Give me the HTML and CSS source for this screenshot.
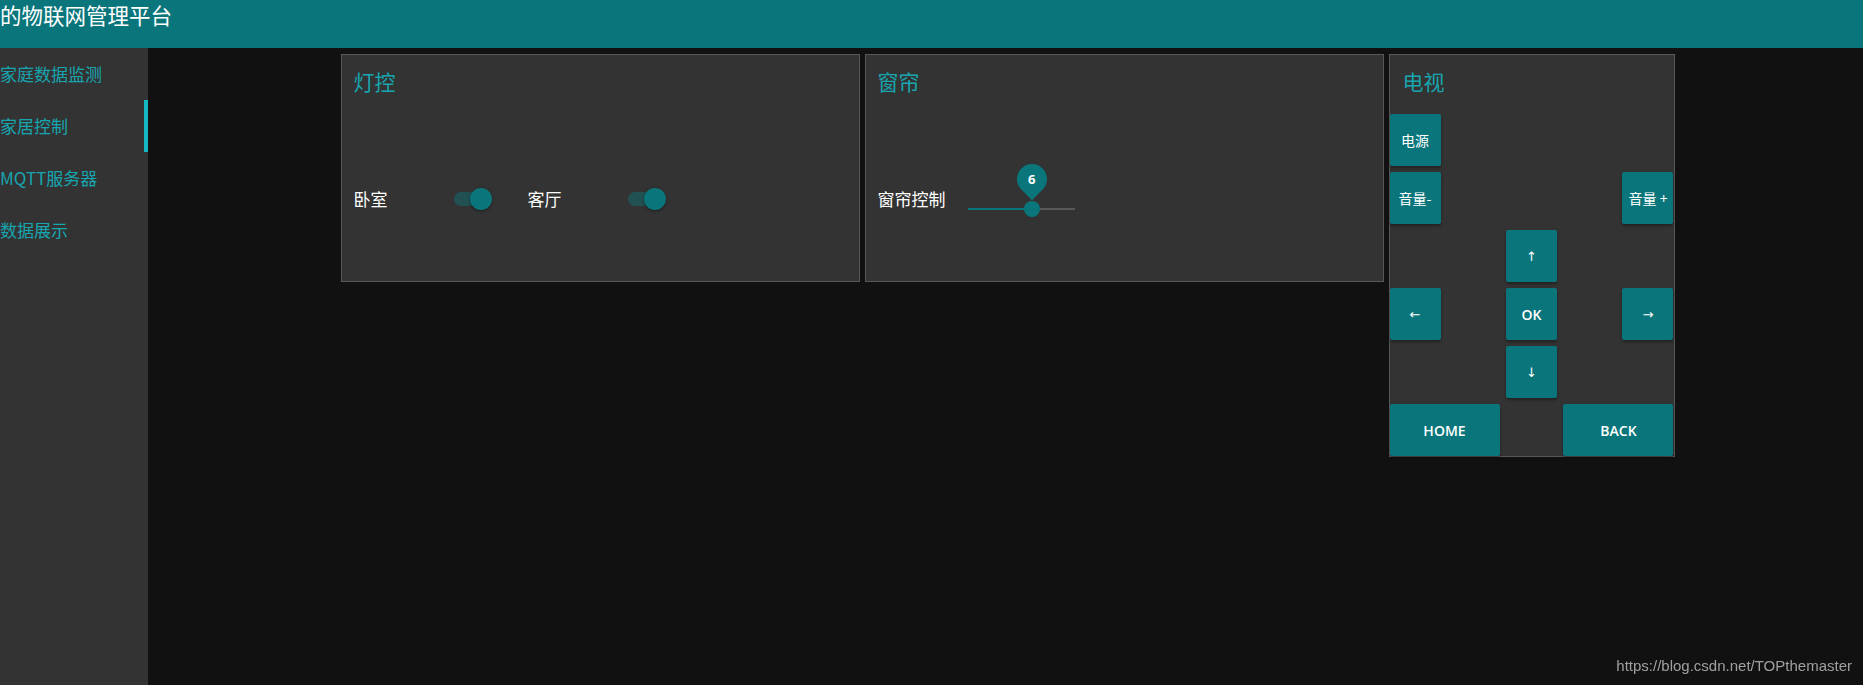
FILE: index.html
```html
<!DOCTYPE html>
<html lang="zh-CN">
  <head>
    <meta charset="UTF-8" />
    <meta name="viewport" content="width=device-width, initial-scale=1.0" />
    <title>物联网管理平台</title>
    <link rel="stylesheet" href="styles.css">
  </head>
  <body>
    <header class="topbar">
      <h1 class="topbar-title">的物联网管理平台</h1>
    </header>
    <div class="layout">
      <nav class="sidebar">
        <a class="nav-item">家庭数据监测</a>
        <a class="nav-item active">家居控制</a>
        <a class="nav-item">MQTT服务器</a>
        <a class="nav-item">数据展示</a>
      </nav>
      <main class="content">
        <section class="card card-wide">
          <h2 class="card-title">灯控</h2>
          <div class="control-row">
            <span class="control-label">卧室</span>
            <label class="switch">
              <input type="checkbox" checked />
              <span class="switch-track"></span>
              <span class="switch-thumb"></span>
            </label>
            <span class="control-label">客厅</span>
            <label class="switch">
              <input type="checkbox" checked />
              <span class="switch-track"></span>
              <span class="switch-thumb"></span>
            </label>
          </div>
        </section>

        <section class="card card-wide">
          <h2 class="card-title">窗帘</h2>
          <div class="control-row">
            <span class="control-label label-narrow">窗帘控制</span>
            <div class="slider">
              <span class="slider-rail"></span>
              <span class="slider-fill" style="width: 60%"></span>
              <span class="slider-thumb" style="left: 60%">
                <span class="slider-bubble"><b>6</b></span>
              </span>
            </div>
          </div>
        </section>

        <section class="card card-tv">
          <h2 class="card-title">电视</h2>
          <div class="remote">
            <button class="key key-cjk key-left">电源</button>
            <span class="key-gap"></span>
            <span class="key-gap"></span>

            <button class="key key-cjk key-left">音量-</button>
            <span class="key-gap"></span>
            <button class="key key-cjk key-right">音量 +</button>

            <span class="key-gap"></span>
            <button class="key key-arrow key-center">↑</button>
            <span class="key-gap"></span>

            <button class="key key-arrow key-left">←</button>
            <button class="key key-center">OK</button>
            <button class="key key-arrow key-right">→</button>

            <span class="key-gap"></span>
            <button class="key key-arrow key-center">↓</button>
            <span class="key-gap"></span>

            <button class="key key-wide key-home">HOME</button>
            <button class="key key-wide key-back">BACK</button>
          </div>
        </section>
      </main>
    </div>
    <div class="watermark">https://blog.csdn.net/TOPthemaster</div>
  </body>
</html>
```

FILE: styles.css
```css
body {
  margin: 0;
  height: 100vh;
  background-color: #111111;
  font-family: "Noto Sans CJK SC", "Noto Sans", sans-serif;
  color: #ffffff;
  display: flex;
  flex-direction: column;
  overflow: hidden;
}
.topbar {
  height: 48px;
  flex-shrink: 0;
  background-color: #0a767b;
}
.topbar-title {
  margin: 0;
  font-size: 21.5px;
  font-weight: 400;
  line-height: 30px;
  white-space: nowrap;
}
.layout {
  flex: 1;
  display: flex;
}
.sidebar {
  width: 148px;
  flex-shrink: 0;
  background-color: #333333;
}
.nav-item {
  display: block;
  height: 52px;
  line-height: 52px;
  font-size: 17px;
  color: #17a6b0;
  white-space: nowrap;
  cursor: pointer;
}
.nav-item.active {
  box-shadow: inset -4px 0 0 #13b8c3;
}
.content {
  flex: 1;
  display: flex;
  justify-content: center;
  align-items: flex-start;
  gap: 5px;
  padding: 6px 0 0 4px;
}
.card {
  box-sizing: border-box;
  flex-shrink: 0;
  background-color: #333333;
  border: 1px solid #585858;
  padding: 12px;
}
.card-wide {
  width: 519px;
  height: 228px;
}
.card-title {
  margin: 0;
  font-size: 21px;
  font-weight: 400;
  line-height: 28px;
  color: #17a6b0;
}
.control-row {
  display: flex;
  align-items: center;
  height: 24px;
  margin-top: 92px;
}
.control-label {
  width: 100px;
  font-size: 17px;
  line-height: 24px;
}
.label-narrow {
  width: 90px;
}

/* switch */
.switch {
  position: relative;
  width: 38px;
  height: 24px;
  margin-right: 36px;
  cursor: pointer;
}
.switch input {
  display: none;
}
.switch-track {
  position: absolute;
  left: 0;
  top: 5px;
  width: 34px;
  height: 14px;
  border-radius: 7px;
  background-color: rgba(10, 118, 123, 0.45);
}
.switch-thumb {
  position: absolute;
  right: 0;
  top: 1px;
  width: 22px;
  height: 22px;
  border-radius: 50%;
  background-color: #0a767b;
  box-shadow: 0 1px 3px rgba(0, 0, 0, 0.45);
}

/* slider */
.slider {
  position: relative;
  width: 107px;
  height: 34px;
  align-self: flex-start;
  margin-top: -5px;
}
.slider-rail,
.slider-fill {
  position: absolute;
  left: 0;
  top: 26px;
  height: 2px;
}
.slider-rail {
  width: 100%;
  background-color: #585858;
}
.slider-fill {
  background-color: #0a767b;
}
.slider-thumb {
  position: absolute;
  top: 19px;
  width: 16px;
  height: 16px;
  margin-left: -8px;
  border-radius: 50%;
  background-color: #0a767b;
}
.slider-bubble {
  position: absolute;
  left: -7px;
  top: -37px;
  width: 30px;
  height: 30px;
  border-radius: 50% 50% 0 50%;
  background-color: #0a767b;
  transform: rotate(45deg);
  display: flex;
  align-items: center;
  justify-content: center;
}
.slider-bubble b {
  transform: rotate(-45deg);
  font-family: "Open Sans", sans-serif;
  font-size: 13px;
  font-weight: 700;
}

/* tv remote */
.card-tv {
  width: 286px;
  height: 403px;
  padding: 12px 0 0;
}
.card-tv .card-title {
  padding-left: 13px;
}
.remote {
  display: grid;
  grid-template-columns: repeat(3, 1fr);
  grid-auto-rows: 52px;
  row-gap: 6px;
  margin-top: 19px;
}
.key {
  width: 51px;
  height: 52px;
  padding: 0;
  border: none;
  border-radius: 2px;
  background-color: #0a767b;
  color: #ffffff;
  font-family: "Open Sans", "Noto Sans CJK SC", sans-serif;
  font-size: 14px;
  font-weight: 600;
  white-space: nowrap;
  box-shadow: 0 2px 3px rgba(0, 0, 0, 0.35);
  cursor: pointer;
}
.key-cjk {
  font-family: "Noto Sans CJK SC", sans-serif;
  font-weight: 400;
}
.key-arrow {
  font-family: "DejaVu Sans", sans-serif;
  font-size: 13px;
  font-weight: 400;
}
.key-left {
  justify-self: start;
}
.key-center {
  justify-self: center;
}
.key-right {
  justify-self: end;
}
.key-wide {
  width: 110px;
  grid-row: 6;
}
.key-home {
  grid-column: 1 / span 2;
  justify-self: start;
}
.key-back {
  grid-column: 2 / span 2;
  justify-self: end;
}

.watermark {
  position: fixed;
  right: 11px;
  bottom: 11px;
  font-family: "Liberation Sans", Arial, sans-serif;
  font-size: 15px;
  color: #a0a0a0;
}
```
